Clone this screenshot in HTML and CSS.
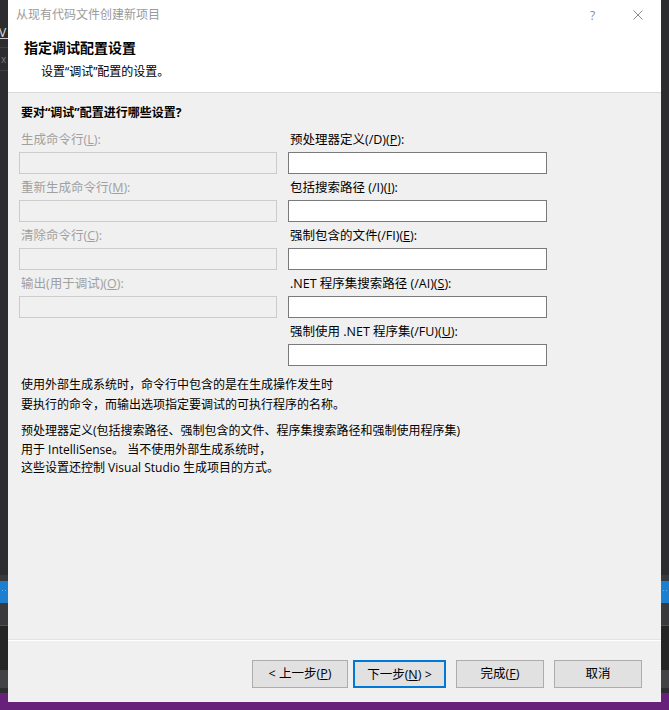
FILE: index.html
```html
<!DOCTYPE html>
<html lang="zh-CN">
<head>
<meta charset="utf-8">
<title>从现有代码文件创建新项目</title>
<link rel="stylesheet" href="styles.css">
</head>
<body>
<div class="screen">
  <div class="strip strip-left">
    <div class="seg seg-top"></div>
    <div class="seg seg-tab">V</div>
    <div class="seg seg-gap"></div>
    <div class="seg seg-line"></div>
    <div class="seg seg-x">x</div>
    <div class="seg seg-line"></div>
    <div class="seg seg-fill"></div>
    <div class="seg seg-a"></div>
    <div class="seg seg-blue"></div>
    <div class="seg seg-b"></div>
    <div class="seg seg-line2"></div>
    <div class="seg seg-c"></div>
    <div class="seg seg-d"></div>
    <div class="seg seg-e"></div>
  </div>

  <div class="dialog">
    <div class="titlebar">
      <span class="title">从现有代码文件创建新项目</span>
      <span class="tb-btn help">?</span>
      <span class="tb-btn close">
        <svg width="10" height="10" viewBox="0 0 10 10"><path d="M0.5 0.5 L9.5 9.5 M9.5 0.5 L0.5 9.5" stroke="#8a8a8a" stroke-width="1" fill="none"/></svg>
      </span>
    </div>

    <div class="header">
      <div class="heading">指定调试配置设置</div>
      <div class="subheading">设置“调试”配置的设置。</div>
    </div>

    <div class="body">
      <div class="question">要对“调试”配置进行哪些设置?</div>
      <div class="fields">
        <div class="field disabled"><div class="label">生成命令行(<u>L</u>):</div><div class="input"></div></div>
        <div class="field"><div class="label">预处理器定义(/D)(<u>P</u>):</div><div class="input"></div></div>
        <div class="field disabled"><div class="label">重新生成命令行(<u>M</u>):</div><div class="input"></div></div>
        <div class="field"><div class="label">包括搜索路径 (/I)(<u>I</u>):</div><div class="input"></div></div>
        <div class="field disabled"><div class="label">清除命令行(<u>C</u>):</div><div class="input"></div></div>
        <div class="field"><div class="label">强制包含的文件(/FI)(<u>E</u>):</div><div class="input"></div></div>
        <div class="field disabled"><div class="label">输出(用于调试)(<u>O</u>):</div><div class="input"></div></div>
        <div class="field"><div class="label">.NET 程序集搜索路径 (/AI)(<u>S</u>):</div><div class="input"></div></div>
        <div class="field empty"></div>
        <div class="field"><div class="label">强制使用 .NET 程序集(/FU)(<u>U</u>):</div><div class="input"></div></div>
      </div>
      <p class="note note1">使用外部生成系统时，命令行中包含的是在生成操作发生时<br>要执行的命令，而输出选项指定要调试的可执行程序的名称。</p>
      <p class="note note2">预处理器定义(包括搜索路径、强制包含的文件、程序集搜索路径和强制使用程序集)<br>用于 IntelliSense。 当不使用外部生成系统时，<br>这些设置还控制 Visual Studio 生成项目的方式。</p>
    </div>

    <div class="footer">
      <button class="btn btn-back">&lt; 上一步(<u>P</u>)</button>
      <button class="btn btn-next">下一步(<u>N</u>) &gt;</button>
      <button class="btn btn-finish">完成(<u>F</u>)</button>
      <button class="btn btn-cancel">取消</button>
    </div>
  </div>

  <div class="strip strip-right">
    <div class="seg seg-chev"></div>
    <div class="seg seg-fill"></div>
    <div class="seg seg-a"></div>
    <div class="seg seg-blue"></div>
    <div class="seg seg-b"></div>
    <div class="seg seg-line2"></div>
    <div class="seg seg-c"></div>
    <div class="seg seg-d"></div>
    <div class="seg seg-e"></div>
  </div>

  <div class="statusbar"></div>
</div>
</body>
</html>
```

FILE: styles.css
```css
* { box-sizing: border-box; }

html, body {
  margin: 0;
  padding: 0;
  background: #2d2d30;
}

body {
  font-family: "Open Sans", "Noto Sans CJK SC", sans-serif;
  font-size: 12px;
  color: #000;
}

.screen {
  display: grid;
  grid-template-columns: 8px 653px 8px;
  grid-template-rows: 693px 9px 8px;
  width: 669px;
  height: 710px;
  overflow: hidden;
}

/* background strips (VS IDE behind the dialog) */
.strip {
  display: flex;
  flex-direction: column;
  overflow: hidden;
  background: #2d2d30;
  grid-row: 1;
}
.strip-left { grid-column: 1; }
.strip-right { grid-column: 3; }

.seg { flex: none; }
.seg-top { height: 27px; }
.seg-tab {
  height: 12px;
  font-size: 12px;
  line-height: 11px;
  color: #e0e0e0;
  text-indent: -1px;
  border-bottom: 1px solid #d0d0d0;
}
.seg-gap { height: 8px; }
.seg-line { height: 1px; background: #3f3f46; }
.seg-x {
  height: 22px;
  font-size: 10px;
  line-height: 22px;
  color: #777;
  text-indent: 1px;
}
.seg-fill { flex: 1; background: #2d2d30; }
.seg-a { height: 6px; background: #3a3a3d; }
.seg-blue {
  height: 22px;
  background: #1c7fd0;
  background-image: radial-gradient(circle, #6ab0e8 0.8px, transparent 1px);
  background-size: 3px 3px;
  background-position: 1px 8px;
  background-repeat: repeat-x;
}
.seg-b { height: 22px; background: #3a3a3d; }
.seg-line2 { height: 1px; background: #505055; }
.seg-c { height: 44px; background: #252526; }
.seg-d { height: 18px; background: #434346; }
.seg-e { height: 5px; background: #2d2d30; }
.seg-chev { height: 12px; background: #2d2d30; }

.statusbar {
  grid-column: 1 / 4;
  grid-row: 2 / 4;
  background: #68217a;
}

/* dialog */
.dialog {
  grid-column: 2;
  grid-row: 1 / 3;
  z-index: 1;
  display: flex;
  flex-direction: column;
  background: #f0f0f0;
}

.titlebar {
  display: flex;
  align-items: center;
  height: 30px;
  background: #fff;
  padding-left: 8px;
}
.title {
  flex: 1;
  font-size: 12px;
  color: #9a9a9a;
  line-height: 30px;
}
.tb-btn {
  display: flex;
  align-items: center;
  justify-content: center;
  height: 30px;
  color: #8a8a8a;
}
.help { width: 45px; font-size: 12px; }
.close { width: 46px; }

.header {
  background: #fff;
  padding: 8px 0 11px 16px;
  border-bottom: 1px solid #d9d9d9;
}
.heading {
  font-size: 14px;
  font-weight: bold;
  line-height: 20px;
}
.subheading {
  margin-top: 5px;
  padding-left: 17px;
  line-height: 18px;
}

.body {
  flex: 1;
  padding: 11px 0 0 11px;
}
.question {
  font-weight: bold;
  line-height: 18px;
  padding-left: 2px;
}

.fields {
  display: grid;
  grid-template-columns: 258px 259px;
  column-gap: 11px;
  row-gap: 5px;
  margin-top: 9px;
}
.label {
  font-size: 12.5px;
  line-height: 18px;
  padding-left: 2px;
  margin-bottom: 3px;
  white-space: nowrap;
}
.input {
  height: 22px;
  background: #fff;
  border: 1px solid #7a7a7a;
}
.disabled .label { color: #a0a0a0; }
.disabled .input {
  background: #f0f0f0;
  border-color: #cccccc;
}

.note {
  margin: 0;
  padding-left: 2px;
}
.note1 {
  margin-top: 9px;
  line-height: 20px;
}
.note2 {
  margin-top: 7px;
  line-height: 18.5px;
}

.footer {
  display: flex;
  justify-content: flex-end;
  gap: 10px;
  padding: 19px 19px 14px 0;
  border-top: 1px solid #fff;
  box-shadow: 0 -1px 0 #e3e3e3;
}
.btn {
  height: 28px;
  padding: 0;
  font: inherit;
  font-size: 12.5px;
  color: #000;
  background: #e1e1e1;
  border: 1px solid #adadad;
  line-height: 26px;
  text-align: center;
}
.btn-back { width: 96px; margin-right: -5px; }
.btn-next { width: 93px; border: 2px solid #0078d7; }
.btn-finish { width: 88px; }
.btn-cancel { width: 88px; }
```
